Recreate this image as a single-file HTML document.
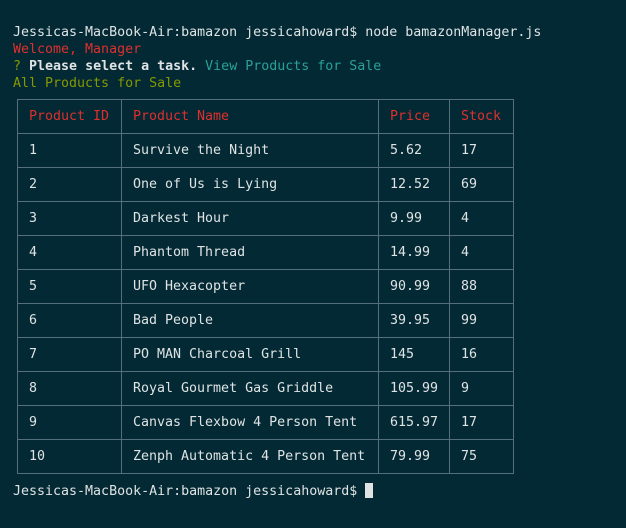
<!DOCTYPE html>
<html><head><meta charset="utf-8"><style>
html,body{margin:0;padding:0;background:#022934;width:626px;height:528px;overflow:hidden}
body{font-family:"DejaVu Sans Mono","Liberation Mono",monospace;font-size:13.3px;color:#dfe3e3;position:relative}
.l{position:absolute;left:13px;line-height:17px;white-space:pre}
.r{color:#e0302d}.t{color:#2aa198}.g{color:#859900}.b{font-weight:bold}
table{position:absolute;left:17px;top:99px;border-collapse:collapse}
td{border:1px solid #55707a;height:34px;padding:0 0 0 11px;white-space:pre;line-height:17px;box-sizing:border-box}
.cur{display:inline-block;width:8px;height:15px;background:#dfe3e3;vertical-align:-3px}
</style></head><body>
<div class="l" style="top:24px">Jessicas-MacBook-Air:bamazon jessicahoward$ node bamazonManager.js</div>
<div class="l r" style="top:41px">Welcome, Manager</div>
<div class="l" style="top:58px"><span class="g">?</span> <span class="b">Please select a task.</span> <span class="t">View Products for Sale</span></div>
<div class="l g" style="top:75px">All Products for Sale</div>
<table>
<colgroup><col style="width:104px"><col style="width:257px"><col style="width:71px"><col style="width:64px"></colgroup>
<tr class="r"><td>Product ID</td><td>Product Name</td><td>Price</td><td>Stock</td></tr>
<tr><td>1</td><td>Survive the Night</td><td>5.62</td><td>17</td></tr>
<tr><td>2</td><td>One of Us is Lying</td><td>12.52</td><td>69</td></tr>
<tr><td>3</td><td>Darkest Hour</td><td>9.99</td><td>4</td></tr>
<tr><td>4</td><td>Phantom Thread</td><td>14.99</td><td>4</td></tr>
<tr><td>5</td><td>UFO Hexacopter</td><td>90.99</td><td>88</td></tr>
<tr><td>6</td><td>Bad People</td><td>39.95</td><td>99</td></tr>
<tr><td>7</td><td>PO MAN Charcoal Grill</td><td>145</td><td>16</td></tr>
<tr><td>8</td><td>Royal Gourmet Gas Griddle</td><td>105.99</td><td>9</td></tr>
<tr><td>9</td><td>Canvas Flexbow 4 Person Tent</td><td>615.97</td><td>17</td></tr>
<tr><td>10</td><td>Zenph Automatic 4 Person Tent</td><td>79.99</td><td>75</td></tr>
</table>
<div class="l" style="top:483px">Jessicas-MacBook-Air:bamazon jessicahoward$ <span class="cur"></span></div>
</body></html>
